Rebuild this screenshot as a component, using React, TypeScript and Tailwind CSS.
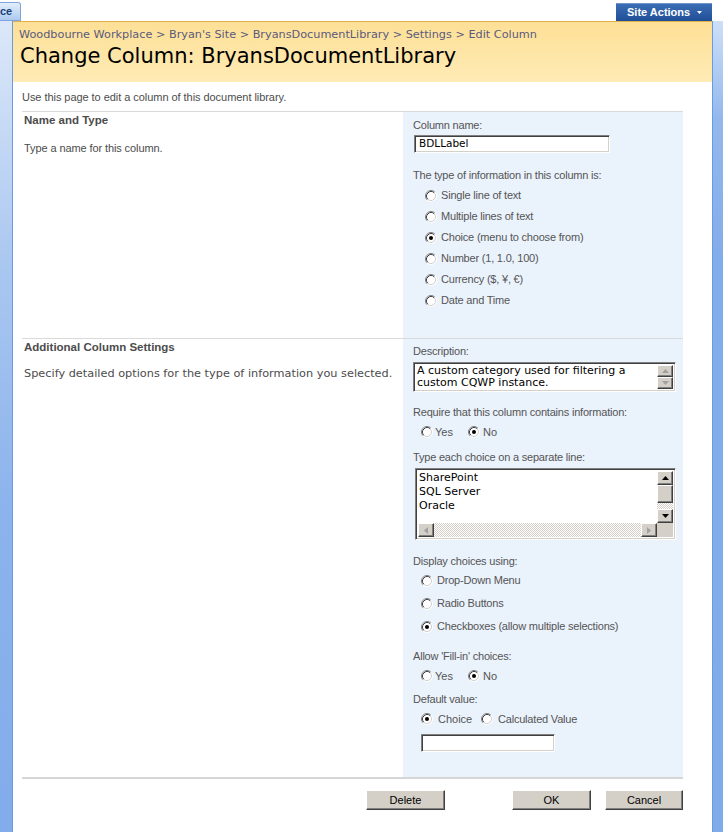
import React from 'react'

const tahoma = "font-['Liberation_Sans',Arial,sans-serif]"
const verdana = "font-['DejaVu_Sans',Verdana,sans-serif]"

function Radio({ checked }: { checked?: boolean }) {
  return (
    <svg width="12" height="12" viewBox="0 0 12 12" className="shrink-0">
      <circle cx="6" cy="6" r="5" fill="#fff" />
      <path d="M2.11 9.89 A5.5 5.5 0 0 1 9.89 2.11" fill="none" stroke="#808080" />
      <path d="M9.89 2.11 A5.5 5.5 0 0 1 2.11 9.89" fill="none" stroke="#fff" />
      <path d="M2.82 9.18 A4.5 4.5 0 0 1 9.18 2.82" fill="none" stroke="#404040" />
      <path d="M9.18 2.82 A4.5 4.5 0 0 1 2.82 9.18" fill="none" stroke="#d4d0c8" />
      {checked && <circle cx="6" cy="6" r="2" fill="#000" />}
    </svg>
  )
}

function Arrow({ dir, off }: { dir: 'up' | 'down' | 'left' | 'right'; off?: boolean }) {
  const fill = off ? '#a0a0a0' : '#000'
  if (dir === 'up' || dir === 'down') {
    return (
      <svg width="7" height="4" viewBox="0 0 7 4">
        <path d={dir === 'up' ? 'M3.5 0 L7 4 L0 4 Z' : 'M0 0 L7 0 L3.5 4 Z'} fill={fill} />
      </svg>
    )
  }
  return (
    <svg width="4" height="7" viewBox="0 0 4 7">
      <path d={dir === 'left' ? 'M0 3.5 L4 0 L4 7 Z' : 'M0 0 L4 3.5 L0 7 Z'} fill={fill} />
    </svg>
  )
}

const raised =
  'bg-[#d4d0c8] border border-t-white border-l-white border-r-[#404040] border-b-[#404040] shadow-[inset_-1px_-1px_0_#808080] flex items-center justify-center'
const sunken =
  'bg-white border border-t-[#808080] border-l-[#808080] border-r-white border-b-white shadow-[inset_1px_1px_0_#404040,inset_-1px_-1px_0_#d4d0c8]'

function Label({ children, className = '' }: { children: React.ReactNode; className?: string }) {
  return <div className={`h-[14px] leading-[14px] text-[11px] tracking-[-0.2px] text-[#555] ${className}`}>{children}</div>
}

export default function App() {
  const types = [
    'Single line of text',
    'Multiple lines of text',
    'Choice (menu to choose from)',
    'Number (1, 1.0, 100)',
    'Currency ($, ¥, €)',
    'Date and Time',
  ]

  return (
    <div className={`w-[723px] h-[832px] overflow-hidden bg-white flex flex-col ${tahoma}`}>
      {/* top bar */}
      <div className="h-[21px] shrink-0 flex items-end justify-between pr-[11px]">
        <div className="w-[21px] h-[19px] bg-[linear-gradient(to_bottom,#e4eefb,#adc9ef)] border border-l-0 border-[#7ea6dc] rounded-tr-[3px] flex items-center text-[11px] font-bold text-[#163f7c] leading-none">
          ce
        </div>
        <div className="h-[18px] w-[96px] bg-[linear-gradient(to_bottom,#3b6db5,#1f4f96)] border-t border-[#6f95cf] flex items-center pl-[11px] text-[11px] font-bold text-white leading-none">
          Site Actions
          <svg width="5" height="3" viewBox="0 0 5 3" className="ml-[7px]">
            <path d="M0 0 L5 0 L2.5 3 Z" fill="#fff" />
          </svg>
        </div>
      </div>

      <div className="flex flex-1">
        <div className="w-[13px] border-r border-[#6a9be2] bg-[linear-gradient(to_bottom,#dce8f9,#aac7f0_30%,#8cb3ec_60%,#82acea)]" />

        <main className="w-[699px]">
          {/* title band */}
          <div className="h-[61px] border-t border-[#dfb14c] bg-[linear-gradient(to_bottom,#fde096,#ffebb6)]">
            <div className={`pl-[6px] pt-[6px] h-[13px] leading-[13px] text-[11.25px] text-[#5a5a7c] ${verdana}`}>
              Woodbourne Workplace &gt; Bryan's Site &gt; BryansDocumentLibrary &gt; Settings &gt; Edit Column
            </div>
            <h1 className={`pl-[7px] mt-[9px] h-[25px] leading-[25px] text-[21px] text-black ${verdana}`}>
              Change Column: BryansDocumentLibrary
            </h1>
          </div>

          <div className="pl-[9px]">
            <p className="mt-[8px] h-[14px] leading-[14px] text-[11px] tracking-[-0.05px] text-[#4c4c4c]">
              Use this page to edit a column of this document library.
            </p>
            <div className="mt-[7px] w-[661px] h-px bg-[#dadada]" />

            {/* Name and Type */}
            <div className="flex w-[661px] h-[226px]">
              <div className="w-[381px] pl-[2px] text-[#4c4c4c]">
                <div className="mt-[1px] h-[14px] leading-[14px] text-[11.5px] font-bold">Name and Type</div>
                <div className="mt-[14px] h-[14px] leading-[14px] text-[11px] tracking-[-0.1px]">
                  Type a name for this column.
                </div>
              </div>
              <div className="w-[280px] bg-[#eaf2fc] pl-[10px]">
                <Label className="mt-[6px]">Column name:</Label>
                <div className={`mt-[3px] ml-[1px] w-[196px] h-[18px] ${sunken} flex items-center pl-[4px] text-[10.5px] text-black ${verdana}`}>
                  BDLLabel
                </div>
                <Label className="mt-[15px]">The type of information in this column is:</Label>
                <div className="mt-[3px]">
                  {types.map((t, i) => (
                    <div key={t} className="h-[21px] flex items-center pl-[12px]">
                      <Radio checked={i === 2} />
                      <span className="ml-[4px] text-[11px] tracking-[-0.2px] text-[#555]">{t}</span>
                    </div>
                  ))}
                </div>
              </div>
            </div>
            <div className="w-[661px] h-px bg-[#dadada]" />

            {/* Additional Column Settings */}
            <div className="flex w-[661px] h-[438px]">
              <div className="w-[381px] pl-[2px] text-[#4c4c4c]">
                <div className="mt-[1px] h-[14px] leading-[14px] text-[11.5px] font-bold">Additional Column Settings</div>
                <div className={`mt-[13px] h-[14px] leading-[14px] text-[11.3px] ${verdana}`}>
                  Specify detailed options for the type of information you selected.
                </div>
              </div>
              <div className="w-[280px] bg-[#eaf2fc] pl-[10px]">
                <Label className="mt-[5px]">Description:</Label>
                <div className={`mt-[4px] w-[263px] h-[30px] ${sunken} flex p-[2px]`}>
                  <div className={`flex-1 pl-[1px] text-[11px] leading-[12px] text-black ${verdana}`}>
                    A custom category used for filtering a custom CQWP instance.
                  </div>
                  <div className="w-[16px] flex flex-col">
                    <div className={`h-[13px] ${raised}`}>
                      <Arrow dir="up" off />
                    </div>
                    <div className={`h-[13px] ${raised}`}>
                      <Arrow dir="down" off />
                    </div>
                  </div>
                </div>

                <Label className="mt-[13px]">Require that this column contains information:</Label>
                <div className="mt-[3px] h-[20px] flex items-center pl-[8px]">
                  <div className="w-[47px] flex items-center">
                    <Radio />
                    <span className="ml-[2px] text-[11px] text-[#555]">Yes</span>
                  </div>
                  <Radio checked />
                  <span className="ml-[3px] text-[11px] text-[#555]">No</span>
                </div>

                <Label className="mt-[8px]">Type each choice on a separate line:</Label>
                <div className={`mt-[4px] ml-[2px] w-[261px] h-[72px] ${sunken} flex flex-col p-[2px]`}>
                  <div className="flex h-[52px]">
                    <div className={`flex-1 pl-[1px] text-[11px] leading-[14px] text-black ${verdana}`}>
                      <div>SharePoint</div>
                      <div>SQL Server</div>
                      <div>Oracle</div>
                    </div>
                    <div className="w-[16px] flex flex-col">
                      <div className={`h-[14px] ${raised}`}>
                        <Arrow dir="up" />
                      </div>
                      <div className={`h-[18px] ${raised}`} />
                      <div className="h-[6px] bg-[repeating-conic-gradient(#d4d0c8_0_25%,#fff_0_50%)] bg-[length:2px_2px]" />
                      <div className={`h-[14px] ${raised}`}>
                        <Arrow dir="down" />
                      </div>
                    </div>
                  </div>
                  <div className="flex h-[16px]">
                    <div className={`w-[16px] ${raised}`}>
                      <Arrow dir="left" off />
                    </div>
                    <div className="flex-1 bg-[repeating-conic-gradient(#d4d0c8_0_25%,#fff_0_50%)] bg-[length:2px_2px]" />
                    <div className={`w-[16px] ${raised}`}>
                      <Arrow dir="right" off />
                    </div>
                    <div className="w-[16px] bg-[#d4d0c8]" />
                  </div>
                </div>

                <Label className="mt-[14px]">Display choices using:</Label>
                <div className="mt-[1px]">
                  {['Drop-Down Menu', 'Radio Buttons', 'Checkboxes (allow multiple selections)'].map((t, i) => (
                    <div key={t} className="h-[23px] flex items-center pl-[8px]">
                      <Radio checked={i === 2} />
                      <span className="ml-[4px] text-[11px] tracking-[-0.2px] text-[#555]">{t}</span>
                    </div>
                  ))}
                </div>

                <Label className="mt-[11px]">Allow 'Fill-in' choices:</Label>
                <div className="mt-[3px] h-[20px] flex items-center pl-[8px]">
                  <div className="w-[47px] flex items-center">
                    <Radio />
                    <span className="ml-[2px] text-[11px] text-[#555]">Yes</span>
                  </div>
                  <Radio checked />
                  <span className="ml-[3px] text-[11px] text-[#555]">No</span>
                </div>

                <Label className="mt-[6px]">Default value:</Label>
                <div className="mt-[3px] h-[20px] flex items-center pl-[8px]">
                  <div className="w-[60px] flex items-center">
                    <Radio checked />
                    <span className="ml-[5px] text-[11px] text-[#555]">Choice</span>
                  </div>
                  <Radio />
                  <span className="ml-[5px] text-[11px] tracking-[-0.2px] text-[#555]">Calculated Value</span>
                </div>
                <div className={`mt-[5px] ml-[8px] w-[134px] h-[18px] ${sunken}`} />
              </div>
            </div>
            <div className="w-[661px] h-[2px] bg-[#d6d6d6]" />

            {/* buttons */}
            <div className="w-[661px] mt-[11px] flex justify-end">
              <button className={`w-[79px] h-[20px] ${raised} text-[11px] text-black`}>Delete</button>
              <button className={`ml-[67px] w-[79px] h-[20px] ${raised} text-[11px] text-black`}>OK</button>
              <button className={`ml-[14px] w-[78px] h-[20px] ${raised} text-[11px] text-black`}>Cancel</button>
            </div>
          </div>
        </main>

        <div className="w-[11px] border-l border-[#6a9be2] bg-[linear-gradient(to_bottom,#cddff7,#93b8ed_12%,#82acea_30%,#80abe9)]" />
      </div>
    </div>
  )
}
